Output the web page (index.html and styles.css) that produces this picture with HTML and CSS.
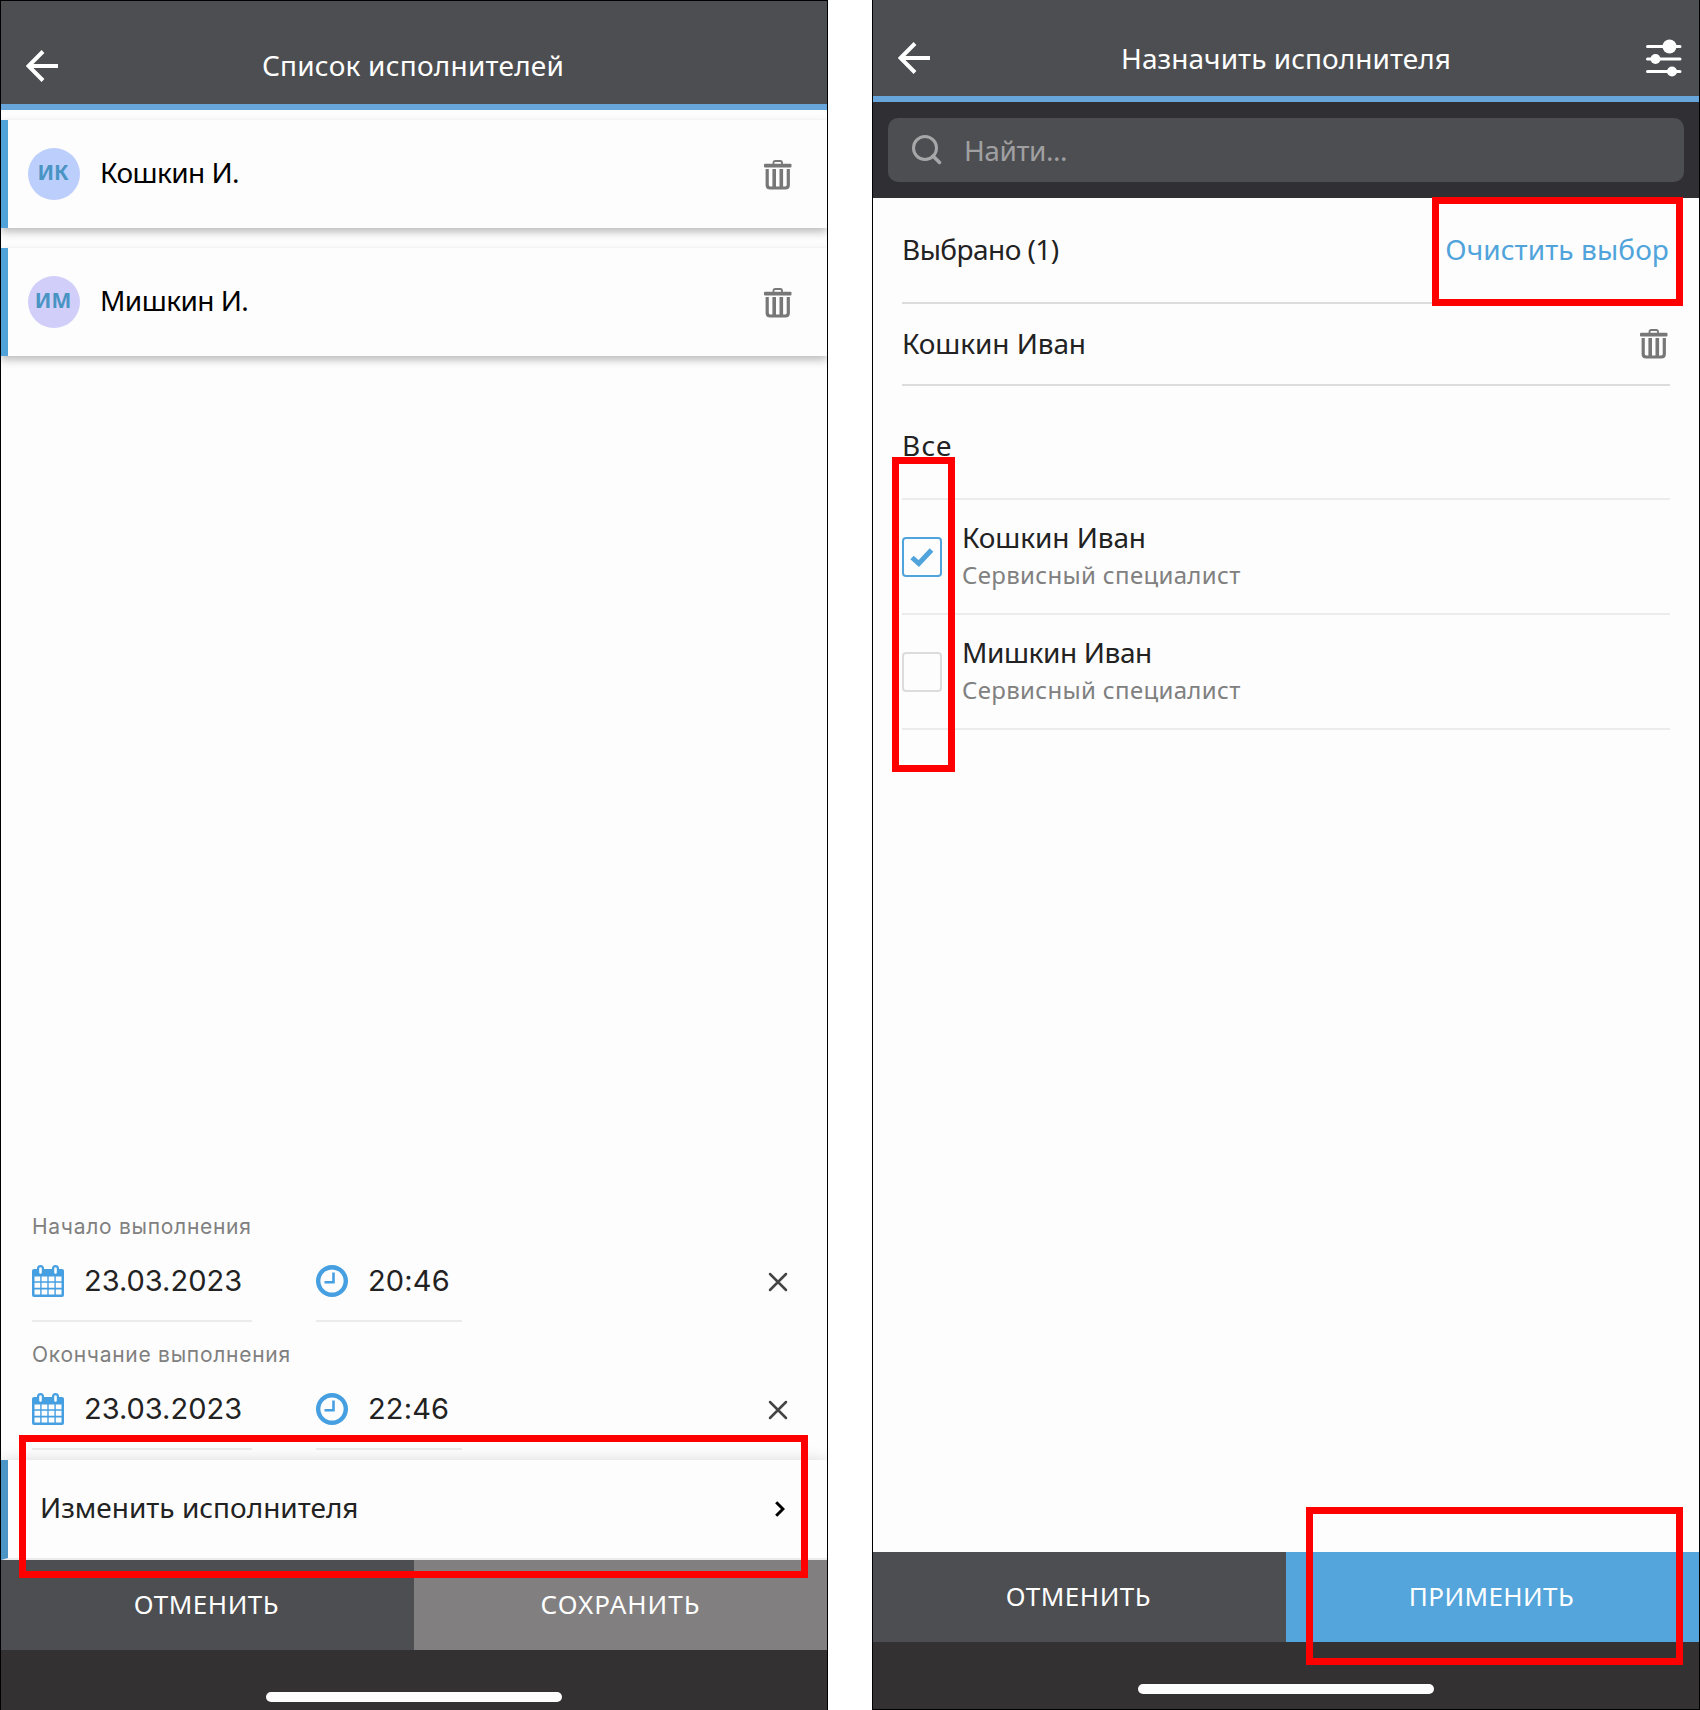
FILE: index.html
```html
<!DOCTYPE html>
<html lang="ru">
<head>
<meta charset="utf-8">
<title>Список исполнителей</title>
<link rel="stylesheet" href="styles.css">
</head>
<body>
<svg width="0" height="0" class="defs" aria-hidden="true">
  <symbol id="back" viewBox="0 0 32 32"><path d="M32 16H3M17 1.5L2.5 16L17 30.5" fill="none" stroke="#fff" stroke-width="4"/></symbol>
  <symbol id="trash" viewBox="0 0 28 30"><path d="M9.500 4V2.800Q9.500 1 11.300 1H16.200Q18 1 18 2.800V4" fill="none" stroke="#777" stroke-width="1.800"/><rect x="0" y="3.800" width="27.500" height="3.800" rx="1" fill="#777"/><path d="M3.200 9V25Q3.200 28 6.200 28H21.300Q24.300 28 24.300 25V9" fill="none" stroke="#777" stroke-width="3.200"/><path d="M10.200 9V27M17.300 9V27" stroke="#777" stroke-width="3.600"/></symbol>
  <symbol id="calendar" viewBox="0 0 32 32"><rect y="4" width="32" height="28" rx="2" fill="#459fe1"/><path d="M8.500 8V3.500M23.500 8V3.500" stroke="#459fe1" stroke-width="7" stroke-linecap="round"/><path d="M8.500 7.500V3.500M23.500 7.500V3.500" stroke="#fdfdfd" stroke-width="2.600" stroke-linecap="round"/><path d="M2.500 11.500h5.700v4.800H2.500zM9.600 11.500h5.700v4.800H9.600zM16.700 11.500h5.700v4.800h-5.700zM23.800 11.500h5.700v4.800h-5.700zM2.500 17.800h5.700v5H2.500zM9.600 17.800h5.700v5H9.600zM16.700 17.800h5.700v5h-5.700zM23.800 17.800h5.700v5h-5.700zM2.500 24.500h5.700v5H2.500zM9.600 24.500h5.700v5H9.600zM16.700 24.500h5.700v5h-5.700zM23.800 24.500h5.700v5h-5.700z" fill="#fdfdfd"/></symbol>
  <symbol id="clock" viewBox="0 0 32 32"><circle cx="16" cy="16" r="13.800" fill="none" stroke="#459fe1" stroke-width="4.400"/><path d="M17.500 7.500V17.300H8.500" fill="none" stroke="#459fe1" stroke-width="2.600"/></symbol>
  <symbol id="close" viewBox="0 0 20 20"><path d="M2 2L18 18M18 2L2 18" stroke="#444" stroke-width="2.500" stroke-linecap="round"/></symbol>
</svg>
<main class="board">
  <section class="phone phone-left">
    <header class="bar">
      <svg class="back"><use href="#back"/></svg>
      <h1 class="title title-list">Список исполнителей</h1>
    </header>
    <div class="cards">
      <article class="card"><span class="avatar">ИК</span><span class="name">Кошкин И.</span><svg class="trash"><use href="#trash"/></svg></article>
      <article class="card"><span class="avatar violet">ИМ</span><span class="name">Мишкин И.</span><svg class="trash"><use href="#trash"/></svg></article>
    </div>
    <div class="times">
      <div class="period">
        <div class="label">Начало выполнения</div>
        <div class="fields">
          <div class="field date"><svg class="ico"><use href="#calendar"/></svg><span>23.03.2023</span></div>
          <div class="field time"><svg class="ico"><use href="#clock"/></svg><span>20:46</span></div>
          <svg class="close"><use href="#close"/></svg>
        </div>
      </div>
      <div class="period">
        <div class="label">Окончание выполнения</div>
        <div class="fields">
          <div class="field date"><svg class="ico"><use href="#calendar"/></svg><span>23.03.2023</span></div>
          <div class="field time"><svg class="ico"><use href="#clock"/></svg><span>22:46</span></div>
          <svg class="close"><use href="#close"/></svg>
        </div>
      </div>
    </div>
    <div class="change"><span class="change-text">Изменить исполнителя</span><svg class="chevron" viewBox="0 0 10 16"><path d="M1.200 1.200L8 8L1.200 14.800" fill="none" stroke="#000" stroke-width="3"/></svg></div>
    <footer class="actions"><button class="btn"><span>ОТМЕНИТЬ</span></button><button class="btn grey"><span>СОХРАНИТЬ</span></button></footer>
    <div class="home"><i></i></div>
    <div class="mark mark-change"></div>
  </section>

  <section class="phone phone-right">
    <header class="bar">
      <svg class="back"><use href="#back"/></svg>
      <h1 class="title title-assign">Назначить исполнителя</h1>
      <svg class="filter" viewBox="0 0 36 38"><path d="M1.500 7.500H34M1.500 20H34M1.500 32.500H34" stroke="#fff" stroke-width="3" stroke-linecap="round"/><circle cx="23.500" cy="7.500" r="7" fill="#fff"/><circle cx="9.500" cy="20" r="5" fill="#fff"/><circle cx="26" cy="32.500" r="5" fill="#fff"/></svg>
    </header>
    <div class="search"><div class="search-box"><svg class="lens" viewBox="0 0 30 30"><circle cx="13" cy="13" r="11.500" fill="none" stroke="#a7a7a9" stroke-width="3"/><path d="M21 21L27.500 27.500" stroke="#a7a7a9" stroke-width="3.500" stroke-linecap="round"/></svg><span class="placeholder">Найти...</span></div></div>
    <div class="content">
      <div class="picked-head"><span class="picked">Выбрано (1)</span><a class="clear">Очистить выбор</a></div>
      <div class="picked-row"><span class="fio">Кошкин Иван</span><svg class="trash"><use href="#trash"/></svg></div>
      <div class="all">Все</div>
      <div class="person"><span class="check on"><svg viewBox="0 0 24 20"><path d="M2 10.500L8.800 16.500L21.500 3" fill="none" stroke="#50a4db" stroke-width="5"/></svg></span><div class="who"><span class="fio">Кошкин Иван</span><span class="role">Сервисный специалист</span></div></div>
      <div class="person"><span class="check"></span><div class="who"><span class="fio fio-wide">Мишкин Иван</span><span class="role">Сервисный специалист</span></div></div>
    </div>
    <footer class="actions"><button class="btn"><span>ОТМЕНИТЬ</span></button><button class="btn blue"><span>ПРИМЕНИТЬ</span></button></footer>
    <div class="home"><i></i></div>
    <div class="mark mark-clear"></div>
    <div class="mark mark-checks"></div>
    <div class="mark mark-apply"></div>
  </section>
</main>
</body>
</html>
```
FILE: styles.css
```css
* { box-sizing: border-box; }
body { margin: 0; background: #fff; font-family: "Noto Sans", "Open Sans", sans-serif; font-size: 28px; color: #222; }
.defs { position: absolute; }
.board { display: flex; justify-content: space-between; width: 1700px; height: 1710px; }
.phone { position: relative; display: flex; flex-direction: column; width: 828px; height: 1710px; background: #fdfdfd; border: 1px solid #000; overflow: hidden; }
.phone-left { border-bottom: 0; }
.phone-right { border-top: 0; }
span, h1, a { white-space: nowrap; }
svg { display: block; flex: none; }

.bar { display: flex; align-items: center; flex: none; height: 109px; padding: 26px 16px 0 25px; background: #4d4e51; border-bottom: 6px solid #67a5da; }
.phone-right .bar { height: 102px; padding: 20px 17px 0 25px; }
.back { width: 32px; height: 32px; }
.title { flex: 1; margin: 0; color: #fff; font-size: 28px; font-weight: 400; line-height: 40px; text-align: center; }
.title-list { padding: 0 43px 2px 0; letter-spacing: .23px; }
.title-assign { padding: 0 4px 1px 0; letter-spacing: .05px; }
.filter { width: 36px; height: 38px; margin-top: -1px; }

.cards { display: flex; flex-direction: column; gap: 20px; padding-top: 10px; }
.card { display: flex; align-items: center; height: 108px; padding: 0 35px 0 20px; border-left: 7px solid #50a3d9; background: #fdfdfd; box-shadow: 0 4px 8px rgba(0,0,0,.26); color: #000; }
.avatar { width: 52px; height: 52px; padding-right: 2px; border-radius: 50%; background: #bccffc; color: #4a94c4; font-size: 21px; font-weight: 700; line-height: 49px; text-align: center; }
.violet { background: #d1cffa; }
.name { flex: 1; margin-left: 20px; padding-bottom: 4px; letter-spacing: -.55px; }
.trash { width: 28px; height: 30px; }
.card .trash { margin-top: 2px; }

.times { display: flex; flex-direction: column; margin-top: auto; padding: 0 39px 0 31px; }
.period { height: 128px; }
.period:last-child { height: 122px; }
.label { height: 36px; color: #808080; font: 21px/34px Inter, sans-serif; letter-spacing: .72px; }
.fields { display: flex; height: 76px; }
.field { display: flex; height: 76px; gap: 20px; border-bottom: 2px solid #ebebeb; padding-top: 19px; font: 29px/32px Inter, sans-serif; }
.date { width: 220px; margin-right: 64px; }
.time { width: 146px; letter-spacing: .15px; }
.ico { width: 32px; height: 32px; }
.close { width: 20px; height: 20px; margin: 26px 0 0 auto; }

.change { display: flex; flex: none; align-items: center; justify-content: space-between; height: 100px; padding: 0 42px 0 32px; border-left: 7px solid #4a94c6; border-bottom: 2px solid #ebebeb; background: #fdfdfd; box-shadow: 0 0 14px rgba(0,0,0,.14); }
.change-text { padding-bottom: 4px; }
.chevron { width: 10px; height: 16px; }
.actions { position: relative; display: flex; flex: none; height: 90px; }
.btn { width: 50%; padding: 0 2px 2px 0; border: 0; background: #4d4e51; color: #fff; font: 26px/88px "Noto Sans", sans-serif; letter-spacing: .55px; }
.grey { padding-right: 0; background: #817f80; letter-spacing: 1px; }
.blue { padding-right: 2px; background: #53a5dc; letter-spacing: .4px; }
.home { display: flex; flex: none; justify-content: center; height: 60px; padding-top: 42px; background: #333132; }
.phone-right .home { height: 67px; }
.home i { width: 296px; height: 10px; border-radius: 5px; background: #fdfdfd; }

.search { flex: none; height: 96px; padding: 16px 15px; background: #302f34; }
.search-box { display: flex; align-items: center; height: 64px; gap: 22px; padding-left: 24px; border-radius: 10px; background: #4d4e51; color: #a0a0a2; }
.lens { width: 30px; height: 30px; }
.placeholder { letter-spacing: -.45px; }
.content { display: flex; flex: 1; flex-direction: column; padding: 0 29px; }
.picked-head { display: flex; justify-content: space-between; height: 106px; border-bottom: 2px solid #dcdcdc; line-height: 102px; }
.picked { letter-spacing: -.55px; }
.clear { padding-right: 1px; color: #50a4db; letter-spacing: .1px; }
.picked-row { display: flex; align-items: center; justify-content: space-between; height: 82px; padding-right: 2px; border-bottom: 2px solid #dcdcdc; }
.picked-row .fio { padding-bottom: 2px; }
.fio { letter-spacing: -.1px; }
.fio-wide { letter-spacing: -.4px; }
.all { height: 114px; padding-top: 39px; border-bottom: 2px solid #ececec; line-height: 40px; letter-spacing: 1.2px; }
.person { display: flex; gap: 20px; height: 115px; border-bottom: 2px solid #ececec; }
.check { display: flex; align-items: center; justify-content: center; width: 40px; height: 40px; margin-top: 37px; border: 2px solid #dcdcdc; border-radius: 4px; }
.on { border-color: #50a4db; }
.check svg { width: 24px; height: 20px; }
.who { display: flex; flex-direction: column; padding-top: 18px; line-height: 38px; }
.role { color: #808080; font-size: 24px; letter-spacing: .33px; }

.mark { position: absolute; border: 7px solid #f00; }
.mark-change { left: 18px; top: 1434px; width: 789px; height: 143px; }
.mark-clear { left: 559px; top: 197px; width: 251px; height: 109px; }
.mark-checks { left: 19px; top: 457px; width: 63px; height: 315px; }
.mark-apply { left: 433px; top: 1507px; width: 377px; height: 158px; }
```
